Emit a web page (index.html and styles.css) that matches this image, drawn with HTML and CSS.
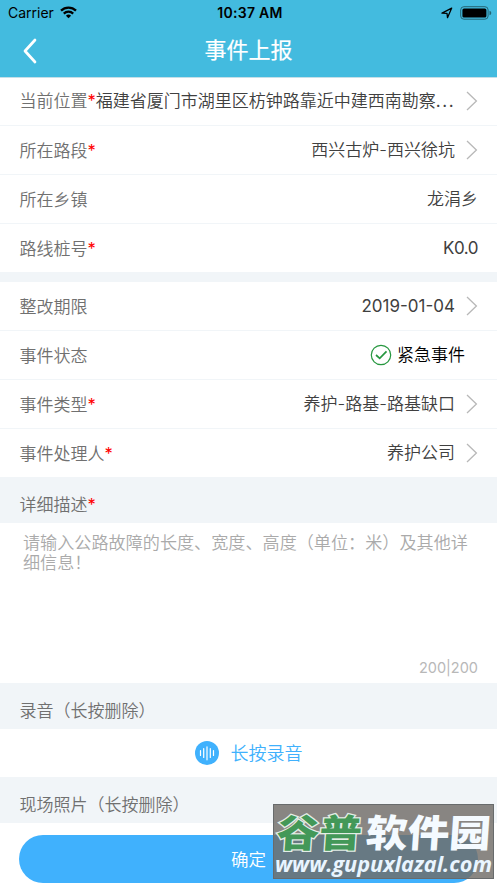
FILE: index.html
```html
<!DOCTYPE html>
<html lang="zh-CN">
<head>
<meta charset="utf-8">
<title>事件上报</title>
<link rel="stylesheet" href="styles.css">
</head>
<body>
<svg class="defs" width="0" height="0"><symbol id="chev" viewBox="0 0 12 20"><path d="M1 1l9.4 9L1 19" fill="none" stroke="#b8b8b8" stroke-width="1.3"/></symbol></svg>
<main class="screen">
  <header class="header">
    <div class="status">
      <div class="carrier"><span>Carrier</span>
        <svg class="wifi" width="17" height="13" viewBox="0 0 17 13" fill="none" stroke="#000" stroke-width="2.3"><path d="M1 4.6a10.8 10.8 0 0 1 15 0"/><path d="M3.8 7.6a6.8 6.8 0 0 1 9.4 0"/><path d="M8.5 12.3L5.9 9.7a3.8 3.8 0 0 1 5.2 0z" fill="#000" stroke="none"/></svg>
      </div>
      <div class="time">10:37 AM</div>
      <div class="indicators">
        <svg width="12" height="12" viewBox="0 0 12 12"><path d="M1 6.2L10.7 1.1 6.5 10.7 6 6.3z" fill="none" stroke="#000" stroke-width="1.3" stroke-linejoin="round"/></svg>
        <svg width="32" height="14" viewBox="0 0 32 14"><rect x=".7" y=".7" width="27.4" height="12.5" rx="3.2" fill="none" stroke="#246574" stroke-width="1"/><rect x="2.4" y="2.4" width="24" height="9.1" rx="1.6"/><path d="M29.5 4.7q1.8.6 1.8 2.3t-1.8 2.3z" fill="#246574"/></svg>
      </div>
    </div>
    <div class="nav">
      <svg class="back" width="14" height="26" viewBox="0 0 14 26"><path d="M12 2L2 13l10 11" fill="none" stroke="#fff" stroke-width="2.7" stroke-linecap="round" stroke-linejoin="round"/></svg>
      <h1>事件上报</h1>
    </div>
  </header>

  <section class="group">
    <div class="row"><label>当前位置<i>*</i></label><span class="value address">福建省厦门市湖里区枋钟路靠近中建西南勘察<span class="dots">...</span></span><svg class="chev"><use href="#chev"/></svg></div>
    <div class="row"><label>所在路段<i>*</i></label><span class="value">西兴古炉-西兴徐坑</span><svg class="chev"><use href="#chev"/></svg></div>
    <div class="row"><label>所在乡镇</label><span class="value">龙涓乡</span></div>
    <div class="row"><label>路线桩号<i>*</i></label><span class="value stake">K0.0</span></div>
  </section>

  <section class="group second">
    <div class="row"><label>整改期限</label><span class="value date">2019-01-04</span><svg class="chev"><use href="#chev"/></svg></div>
    <div class="row"><label>事件状态</label><span class="value urgent"><svg width="22" height="22" viewBox="0 0 22 22" fill="none" stroke="#26973f"><circle cx="11" cy="11" r="9.7" stroke-width="1.2"/><path d="M6 11l3.7 3.4L16.5 7.3" stroke-width="1.7"/></svg>紧急事件</span></div>
    <div class="row"><label>事件类型<i>*</i></label><span class="value">养护-路基-路基缺口</span><svg class="chev"><use href="#chev"/></svg></div>
    <div class="row"><label>事件处理人<i>*</i></label><span class="value">养护公司</span><svg class="chev"><use href="#chev"/></svg></div>
  </section>

  <div class="caption detail">详细描述<i>*</i></div>
  <section class="description">
    <p>请输入公路故障的长度、宽度、高度（单位：米）及其他详<br>细信息！</p>
    <span class="count">200|200</span>
  </section>
  <div class="caption audio">录音（长按删除）</div>
  <section class="record">
    <svg width="24" height="24" viewBox="0 0 24 24"><circle cx="12" cy="12" r="12" fill="#40b1fd"/><path d="M5.5 9.5v5M8.7 7.5v9M12 5.8v13M15.3 7.5v9M18.5 9.5v5" stroke="#fff" stroke-width="1.2" stroke-linecap="round"/></svg>
    <span>长按录音</span>
  </section>
  <div class="caption photos">现场照片（长按删除）</div>
  <div class="footer"><button>确定</button></div>
  <aside class="watermark">
    <svg width="221" height="75" viewBox="0 0 221 75">
      <g class="brand" transform="translate(2 43) skewX(-4)">
        <text class="green" transform="scale(1 1.06)" x="1" y="0" textLength="85" lengthAdjust="spacingAndGlyphs">谷普</text>
        <text class="white" transform="scale(1 1.06)" x="90" y="0" textLength="125" lengthAdjust="spacingAndGlyphs">软件园</text>
      </g>
      <text class="url" x="2" y="68" textLength="217" lengthAdjust="spacingAndGlyphs">www.gupuxlazal.com</text>
    </svg>
  </aside>
</main>
</body>
</html>
```
FILE: styles.css
```css
* { box-sizing: border-box; }
body { margin: 0; font-family: Inter, "Noto Sans CJK SC", sans-serif; background: #fff; }
.defs { position: absolute; }
.screen { position: relative; width: 497px; height: 883px; overflow: hidden; background: #f1f5f8; }
.header { height: 78px; background: #43bbdf; border-bottom: 1px solid #c5dfe8; }
.status { height: 26px; display: grid; grid-template-columns: 1fr auto 1fr; align-items: center; padding: 0 5px 0 8px; font-size: 14px; line-height: 26px; color: #000; }
.carrier { display: flex; align-items: center; gap: 6px; letter-spacing: 0; }
.wifi { margin-top: -2px; }
.time { font-weight: 600; font-size: 14px; letter-spacing: .3px; }
.indicators { display: flex; justify-content: flex-end; align-items: center; gap: 7px; }
.nav { height: 50px; display: grid; grid-template-columns: 24px 1fr 24px; align-items: center; padding: 0 23px; }
.back { width: 14px; height: 26px; margin-top: -1px; }
h1 { margin: -2px 0 0; color: #fff; text-align: center; font-size: 22px; font-weight: 400; -webkit-text-stroke: .2px #fff; line-height: 48px; }
.group { background: #fff; }
.second { margin-top: 9px; }
.row { height: 49px; display: flex; align-items: center; padding: 0 19px 0 19.5px; border-bottom: 1px solid #f1f5f8; font-size: 17px; line-height: 24px; white-space: nowrap; }
.group:not(.second) .row:first-child { height: 48px; padding-bottom: 2px; }
label { color: #707070; font-weight: 350; padding-top: 1px; }
i { position: relative; top: -1px; font-style: normal; color: #f00; font-weight: 400; font-size: 16.5px; }
.value { margin-left: auto; color: #404040; font-weight: 350; }
.stake { letter-spacing: -.5px; font-weight: 400; }
.date { font-weight: 400; }
.dots { letter-spacing: 1.6px; font-weight: 400; }
.address { margin-left: 0; }
.chev { width: 12px; height: 20px; flex: none; margin-left: 11px; }
.row .address + .chev { margin-left: auto; }
.urgent { display: flex; align-items: center; gap: 5px; color: #000; margin-right: 13px; }
.caption { display: flex; align-items: center; padding: 9px 19.5px 0; color: #707070; font-size: 17px; font-weight: 350; line-height: 24px; }
.detail { height: 45px; }
.description { height: 160px; background: #fff; display: flex; flex-direction: column; justify-content: space-between; padding: 10px 19px 5px 23px; color: #aaa; }
.description p { margin: 0; font-size: 17.13px; line-height: 20px; font-weight: 350; white-space: nowrap; }
.count { align-self: flex-end; font-size: 14.5px; line-height: 20px; color: #b8b8b8; }
.audio { height: 46px; }
.record { height: 48px; background: #fff; display: flex; align-items: center; justify-content: center; gap: 12px; color: #40b1fd; font-size: 18px; line-height: 24px; }
.record span { padding-top: 2px; font-weight: 350; }
.photos { height: 46px; }
.footer { height: 60px; padding: 12px 19px 0; background: #fff; }
button { display: block; width: 100%; height: 48px; border: 0; border-radius: 24px; padding: 0; background: #40b1fd; color: #fff; font: 350 17.5px/47px Inter, "Noto Sans CJK SC", sans-serif; }
.watermark { position: absolute; left: 273px; top: 804px; width: 221px; height: 75px; background: rgba(112, 108, 104, .82); border: 1px solid #686b6c; }
.watermark svg { display: block; margin: -1px; }
.brand { font-family: "Noto Sans CJK SC", sans-serif; font-size: 36px; font-weight: 900; }
.green { fill: #439858; stroke: #e3eee6; stroke-width: 2.4px; paint-order: stroke; }
.white { fill: #f4faff; }
.url { font-family: "Open Sans", sans-serif; font-size: 22px; font-weight: 700; font-style: italic; fill: #e9f5ff; }
```
